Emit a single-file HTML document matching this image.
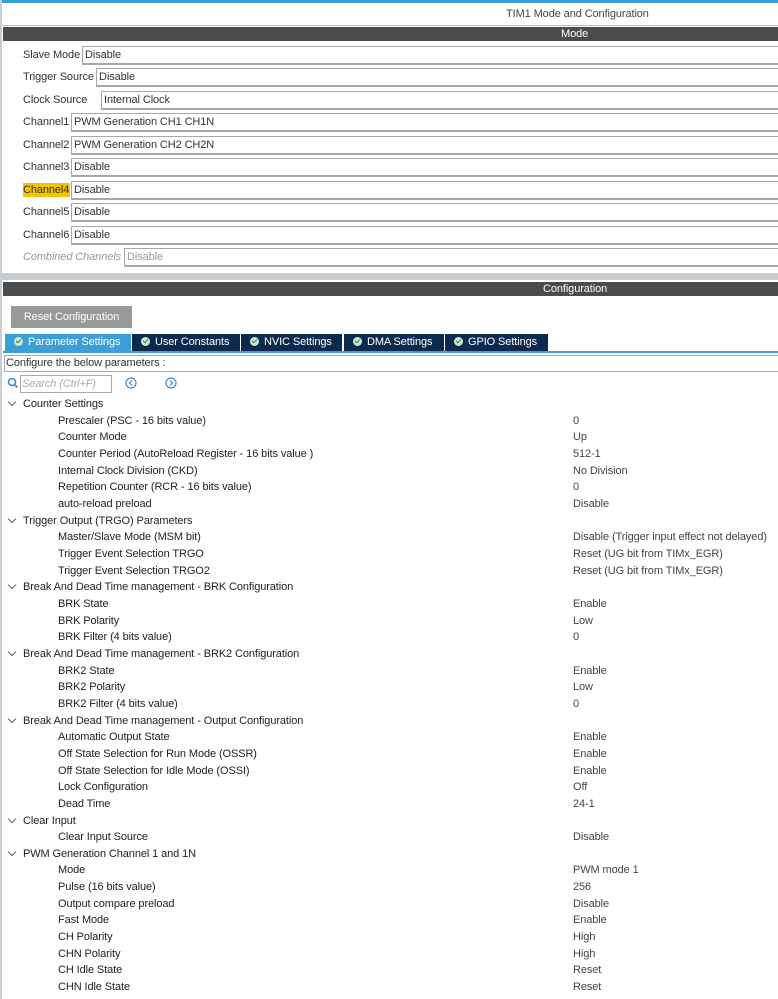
<!DOCTYPE html>
<html><head><meta charset="utf-8"><style>
*{margin:0;padding:0;box-sizing:border-box}
body{width:778px;height:999px;overflow:hidden;background:#fff;font-family:"Liberation Sans",Arial,sans-serif;font-size:11px;letter-spacing:-0.1px;color:#333;position:relative}
.a{position:absolute;white-space:nowrap}
.lbl{position:absolute;left:23px;line-height:14px;color:#333;white-space:nowrap}
.box{position:absolute;height:19px;right:-5px;border:1px solid #a8a8a8;border-bottom:2px solid #a8a8a8;padding-left:2px;line-height:16px;color:#333;background:#fff;white-space:nowrap}
.hdr{position:absolute;left:3px;right:0;height:14px;background:#4b4b4b;color:#fff;line-height:14px}
.tab{position:absolute;top:334px;height:17px;background:#0c2a4e;color:#fff;line-height:17px;padding-left:9px;white-space:nowrap}
.tab i{display:inline-block;width:9px;height:9px;border-radius:50%;background:#cfe8d0;margin-right:5px;vertical-align:-1px;position:relative}
.tab i:after{content:"";position:absolute;left:2px;top:2px;width:4px;height:2px;border-left:1.5px solid #2a8a3a;border-bottom:1.5px solid #2a8a3a;transform:rotate(-45deg)}
.r{position:absolute;line-height:14px;color:#222;white-space:nowrap}
.v{position:absolute;left:573px;line-height:14px;color:#444;white-space:nowrap}
.g{left:23px}.c{left:58px}
.chev{position:absolute;left:9px;width:6px;height:6px;border-right:1px solid #666;border-bottom:1px solid #666;transform:rotate(45deg)}
</style></head><body>
<div class="a" style="left:0;top:0;width:778px;height:3px;background:#3a9fd6"></div>
<div class="a" style="left:0;top:0;width:2px;height:999px;background:#c8cdd2"></div>
<div class="a" style="left:506px;top:8px;color:#444">TIM1 Mode and Configuration</div>
<div class="a" style="left:2px;top:25px;right:0;height:1px;background:#bbb"></div>
<div class="hdr" style="top:27px"><span class="a" style="left:558px">Mode</span></div>

<div class="lbl" style="top:48px">Slave Mode</div><div class="box" style="left:82px;top:46px">Disable</div>
<div class="lbl" style="top:70px">Trigger Source</div><div class="box" style="left:96px;top:68px">Disable</div>
<div class="lbl" style="top:93px">Clock Source</div><div class="box" style="left:101px;top:91px">Internal Clock</div>
<div class="lbl" style="top:115px">Channel1</div><div class="box" style="left:71px;top:113px">PWM Generation CH1 CH1N</div>
<div class="lbl" style="top:138px">Channel2</div><div class="box" style="left:71px;top:136px">PWM Generation CH2 CH2N</div>
<div class="lbl" style="top:160px">Channel3</div><div class="box" style="left:71px;top:158px">Disable</div>
<div class="lbl" style="top:183px;background:#f5c400;left:23px;width:47px">Channel4</div><div class="box" style="left:71px;top:181px">Disable</div>
<div class="lbl" style="top:205px">Channel5</div><div class="box" style="left:71px;top:203px">Disable</div>
<div class="lbl" style="top:228px">Channel6</div><div class="box" style="left:71px;top:226px">Disable</div>
<div class="lbl" style="top:250px;color:#999;font-style:italic">Combined Channels</div><div class="box" style="left:124px;top:248px;color:#999">Disable</div>

<div class="a" style="left:0;top:273px;width:778px;height:7px;background:#c8cdd2"></div>
<div class="hdr" style="top:282px"><span class="a" style="left:540px">Configuration</span></div>
<div class="a" style="left:11px;top:306px;width:121px;height:22px;background:#999;color:#fff;line-height:22px;text-align:center">Reset Configuration</div>

<div class="tab" style="left:5px;width:126px;background:#3a9fd6"><i></i>Parameter Settings</div>
<div class="tab" style="left:132px;width:108px"><i></i>User Constants</div>
<div class="tab" style="left:241px;width:101px"><i></i>NVIC Settings</div>
<div class="tab" style="left:344px;width:100px"><i></i>DMA Settings</div>
<div class="tab" style="left:445px;width:103px"><i></i>GPIO Settings</div>
<div class="a" style="left:3px;top:351px;right:0;height:2px;background:#3a9fd6"></div>
<div class="a" style="left:4px;top:355px;right:-2px;height:17px;border:1px solid #aaa;line-height:15px;padding-left:1px;color:#333">Configure the below parameters :</div>
<svg class="a" style="left:7px;top:377px" width="12" height="12"><circle cx="5" cy="5" r="3.5" fill="none" stroke="#3a8fd0" stroke-width="1.6"/><line x1="7.5" y1="7.5" x2="10.5" y2="10.5" stroke="#3a8fd0" stroke-width="1.8"/></svg>
<div class="a" style="left:20px;top:375px;width:92px;height:18px;border:1px solid #aaa;color:#aaa;font-style:italic;line-height:16px;padding-left:1px">Search (Ctrl+F)</div>
<svg class="a" style="left:125px;top:377px" width="12" height="12"><circle cx="6" cy="6" r="5" fill="none" stroke="#3a8fd0" stroke-width="1.2"/><path d="M7 3.5L4.5 6 7 8.5" fill="none" stroke="#3a8fd0" stroke-width="1.2"/></svg>
<svg class="a" style="left:165px;top:377px" width="12" height="12"><circle cx="6" cy="6" r="5" fill="none" stroke="#3a8fd0" stroke-width="1.2"/><path d="M5 3.5L7.5 6 5 8.5" fill="none" stroke="#3a8fd0" stroke-width="1.2"/></svg>

<div class="chev" style="top:399px"></div><div class="r g" style="top:397px">Counter Settings</div>
<div class="r c" style="top:414px">Prescaler (PSC - 16 bits value)</div><div class="v" style="top:414px">0</div>
<div class="r c" style="top:430px">Counter Mode</div><div class="v" style="top:430px">Up</div>
<div class="r c" style="top:447px">Counter Period (AutoReload Register - 16 bits value )</div><div class="v" style="top:447px">512-1</div>
<div class="r c" style="top:464px">Internal Clock Division (CKD)</div><div class="v" style="top:464px">No Division</div>
<div class="r c" style="top:480px">Repetition Counter (RCR - 16 bits value)</div><div class="v" style="top:480px">0</div>
<div class="r c" style="top:497px">auto-reload preload</div><div class="v" style="top:497px">Disable</div>
<div class="chev" style="top:516px"></div><div class="r g" style="top:514px">Trigger Output (TRGO) Parameters</div>
<div class="r c" style="top:530px">Master/Slave Mode (MSM bit)</div><div class="v" style="top:530px">Disable (Trigger input effect not delayed)</div>
<div class="r c" style="top:547px">Trigger Event Selection TRGO</div><div class="v" style="top:547px">Reset (UG bit from TIMx_EGR)</div>
<div class="r c" style="top:564px">Trigger Event Selection TRGO2</div><div class="v" style="top:564px">Reset (UG bit from TIMx_EGR)</div>
<div class="chev" style="top:582px"></div><div class="r g" style="top:580px">Break And Dead Time management - BRK Configuration</div>
<div class="r c" style="top:597px">BRK State</div><div class="v" style="top:597px">Enable</div>
<div class="r c" style="top:614px">BRK Polarity</div><div class="v" style="top:614px">Low</div>
<div class="r c" style="top:630px">BRK Filter (4 bits value)</div><div class="v" style="top:630px">0</div>
<div class="chev" style="top:649px"></div><div class="r g" style="top:647px">Break And Dead Time management - BRK2 Configuration</div>
<div class="r c" style="top:664px">BRK2 State</div><div class="v" style="top:664px">Enable</div>
<div class="r c" style="top:680px">BRK2 Polarity</div><div class="v" style="top:680px">Low</div>
<div class="r c" style="top:697px">BRK2 Filter (4 bits value)</div><div class="v" style="top:697px">0</div>
<div class="chev" style="top:716px"></div><div class="r g" style="top:714px">Break And Dead Time management - Output Configuration</div>
<div class="r c" style="top:730px">Automatic Output State</div><div class="v" style="top:730px">Enable</div>
<div class="r c" style="top:747px">Off State Selection for Run Mode (OSSR)</div><div class="v" style="top:747px">Enable</div>
<div class="r c" style="top:764px">Off State Selection for Idle Mode (OSSI)</div><div class="v" style="top:764px">Enable</div>
<div class="r c" style="top:780px">Lock Configuration</div><div class="v" style="top:780px">Off</div>
<div class="r c" style="top:797px">Dead Time</div><div class="v" style="top:797px">24-1</div>
<div class="chev" style="top:816px"></div><div class="r g" style="top:814px">Clear Input</div>
<div class="r c" style="top:830px">Clear Input Source</div><div class="v" style="top:830px">Disable</div>
<div class="chev" style="top:849px"></div><div class="r g" style="top:847px">PWM Generation Channel 1 and 1N</div>
<div class="r c" style="top:863px">Mode</div><div class="v" style="top:863px">PWM mode 1</div>
<div class="r c" style="top:880px">Pulse (16 bits value)</div><div class="v" style="top:880px">256</div>
<div class="r c" style="top:897px">Output compare preload</div><div class="v" style="top:897px">Disable</div>
<div class="r c" style="top:913px">Fast Mode</div><div class="v" style="top:913px">Enable</div>
<div class="r c" style="top:930px">CH Polarity</div><div class="v" style="top:930px">High</div>
<div class="r c" style="top:947px">CHN Polarity</div><div class="v" style="top:947px">High</div>
<div class="r c" style="top:963px">CH Idle State</div><div class="v" style="top:963px">Reset</div>
<div class="r c" style="top:980px">CHN Idle State</div><div class="v" style="top:980px">Reset</div>
</body></html>
